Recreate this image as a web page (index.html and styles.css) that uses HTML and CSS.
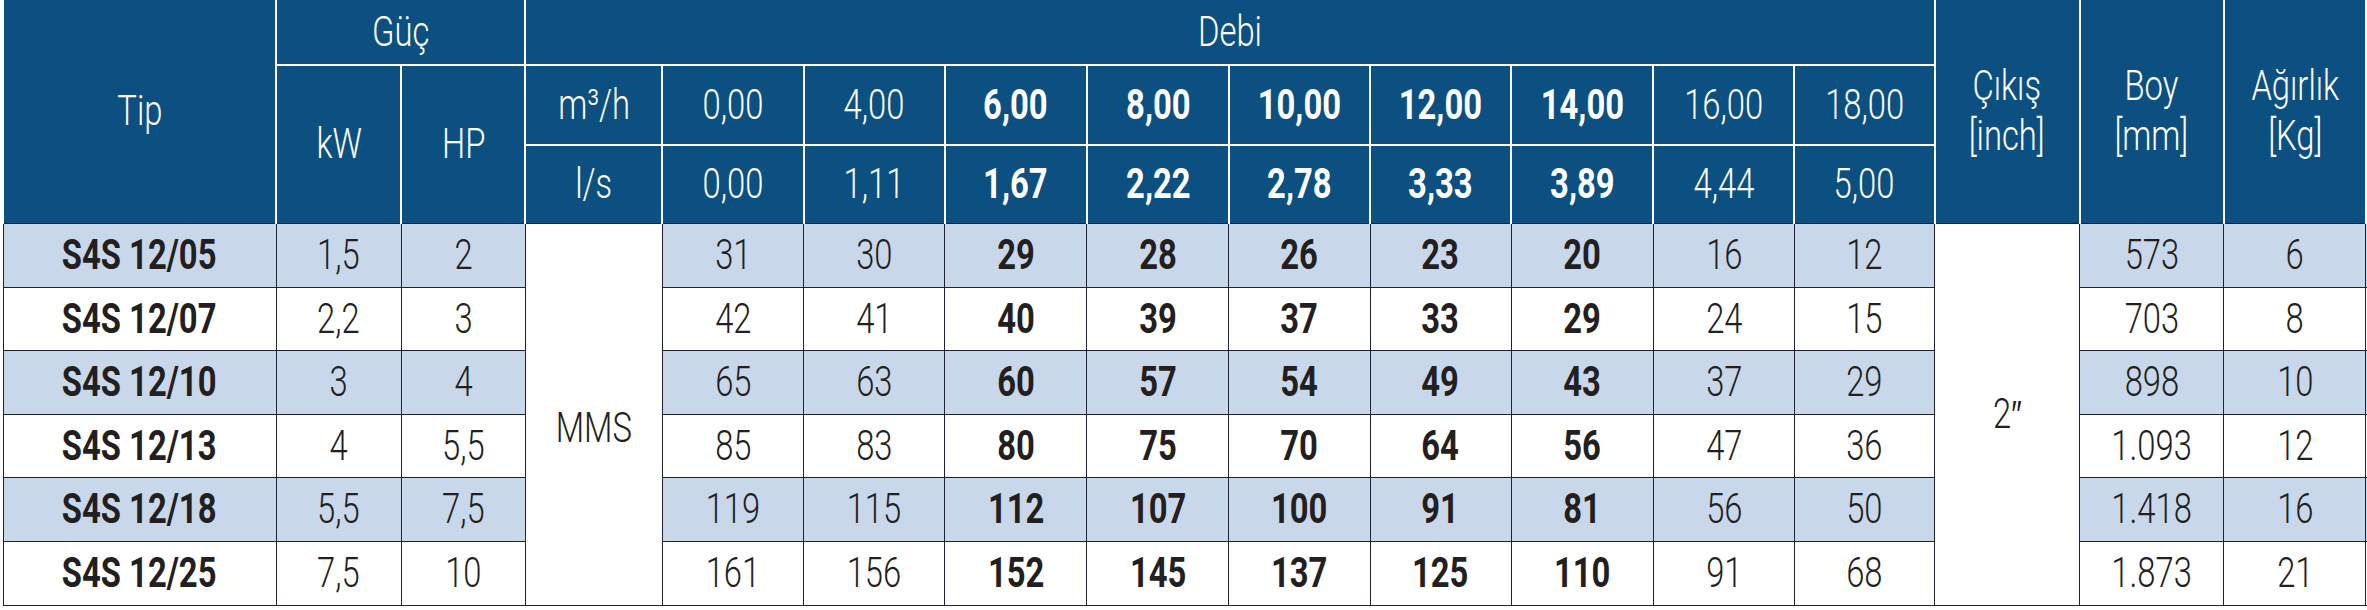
FILE: index.html
```html
<!DOCTYPE html>
<html lang="tr">
<head>
<meta charset="utf-8">
<title>S4S 12 Performans Tablosu</title>
<link rel="stylesheet" href="styles.css">
</head>
<body>
<table class="perf">
  <colgroup>
    <col class="w-tip"><col class="w-kw"><col class="w-hp"><col class="w-unit">
    <col class="w-v1"><col class="w-v2"><col class="w-v3"><col class="w-v4"><col class="w-v5">
    <col class="w-v6"><col class="w-v7"><col class="w-v8"><col class="w-v9">
    <col class="w-cikis"><col class="w-boy"><col class="w-agr"><col class="w-extra">
  </colgroup>
  <thead>
    <tr class="h1">
      <th rowspan="3" class="hb"><span class="t">Tip</span></th>
      <th colspan="2"><span class="t">Güç</span></th>
      <th colspan="10"><span class="t">Debi</span></th>
      <th rowspan="3" class="hb"><span class="t">Çıkış<br>[inch]</span></th>
      <th rowspan="3" class="hb"><span class="t">Boy<br>[mm]</span></th>
      <th rowspan="3" class="hb"><span class="t">Ağırlık<br>[Kg]</span></th>
      <th rowspan="3" class="hb"></th>
    </tr>
    <tr class="h2">
      <th rowspan="2" class="hb"><span class="t">kW</span></th>
      <th rowspan="2" class="hb"><span class="t">HP</span></th>
      <th><span class="t">m³/h</span></th>
      <th><span class="t">0,00</span></th>
      <th><span class="t">4,00</span></th>
      <th class="b"><span class="t">6,00</span></th>
      <th class="b"><span class="t">8,00</span></th>
      <th class="b"><span class="t">10,00</span></th>
      <th class="b"><span class="t">12,00</span></th>
      <th class="b"><span class="t">14,00</span></th>
      <th><span class="t">16,00</span></th>
      <th><span class="t">18,00</span></th>
    </tr>
    <tr class="h3">
      <th class="hb"><span class="t">l/s</span></th>
      <th class="hb"><span class="t">0,00</span></th>
      <th class="hb"><span class="t">1,11</span></th>
      <th class="hb b"><span class="t">1,67</span></th>
      <th class="hb b"><span class="t">2,22</span></th>
      <th class="hb b"><span class="t">2,78</span></th>
      <th class="hb b"><span class="t">3,33</span></th>
      <th class="hb b"><span class="t">3,89</span></th>
      <th class="hb"><span class="t">4,44</span></th>
      <th class="hb"><span class="t">5,00</span></th>
    </tr>
  </thead>
  <tbody>
    <tr class="odd r1">
      <td class="b"><span class="t">S4S 12/05</span></td><td><span class="t">1,5</span></td><td><span class="t">2</span></td>
      <td rowspan="6" class="span mms"><span class="t">MMS</span></td>
      <td><span class="t">31</span></td><td><span class="t">30</span></td>
      <td class="b"><span class="t">29</span></td><td class="b"><span class="t">28</span></td><td class="b"><span class="t">26</span></td><td class="b"><span class="t">23</span></td><td class="b"><span class="t">20</span></td>
      <td><span class="t">16</span></td><td><span class="t">12</span></td>
      <td rowspan="6" class="span"><span class="t">2<span class="dp">″</span></span></td>
      <td><span class="t">573</span></td><td><span class="t">6</span></td><td></td>
    </tr>
    <tr class="r2">
      <td class="b"><span class="t">S4S 12/07</span></td><td><span class="t">2,2</span></td><td><span class="t">3</span></td>
      <td><span class="t">42</span></td><td><span class="t">41</span></td>
      <td class="b"><span class="t">40</span></td><td class="b"><span class="t">39</span></td><td class="b"><span class="t">37</span></td><td class="b"><span class="t">33</span></td><td class="b"><span class="t">29</span></td>
      <td><span class="t">24</span></td><td><span class="t">15</span></td>
      <td><span class="t">703</span></td><td><span class="t">8</span></td><td></td>
    </tr>
    <tr class="odd r3">
      <td class="b"><span class="t">S4S 12/10</span></td><td><span class="t">3</span></td><td><span class="t">4</span></td>
      <td><span class="t">65</span></td><td><span class="t">63</span></td>
      <td class="b"><span class="t">60</span></td><td class="b"><span class="t">57</span></td><td class="b"><span class="t">54</span></td><td class="b"><span class="t">49</span></td><td class="b"><span class="t">43</span></td>
      <td><span class="t">37</span></td><td><span class="t">29</span></td>
      <td><span class="t">898</span></td><td><span class="t">10</span></td><td></td>
    </tr>
    <tr class="r4">
      <td class="b"><span class="t">S4S 12/13</span></td><td><span class="t">4</span></td><td><span class="t">5,5</span></td>
      <td><span class="t">85</span></td><td><span class="t">83</span></td>
      <td class="b"><span class="t">80</span></td><td class="b"><span class="t">75</span></td><td class="b"><span class="t">70</span></td><td class="b"><span class="t">64</span></td><td class="b"><span class="t">56</span></td>
      <td><span class="t">47</span></td><td><span class="t">36</span></td>
      <td><span class="t">1.093</span></td><td><span class="t">12</span></td><td></td>
    </tr>
    <tr class="odd r5">
      <td class="b"><span class="t">S4S 12/18</span></td><td><span class="t">5,5</span></td><td><span class="t">7,5</span></td>
      <td><span class="t">119</span></td><td><span class="t">115</span></td>
      <td class="b"><span class="t">112</span></td><td class="b"><span class="t">107</span></td><td class="b"><span class="t">100</span></td><td class="b"><span class="t">91</span></td><td class="b"><span class="t">81</span></td>
      <td><span class="t">56</span></td><td><span class="t">50</span></td>
      <td><span class="t">1.418</span></td><td><span class="t">16</span></td><td></td>
    </tr>
    <tr class="r6">
      <td class="b"><span class="t">S4S 12/25</span></td><td><span class="t">7,5</span></td><td><span class="t">10</span></td>
      <td><span class="t">161</span></td><td><span class="t">156</span></td>
      <td class="b"><span class="t">152</span></td><td class="b"><span class="t">145</span></td><td class="b"><span class="t">137</span></td><td class="b"><span class="t">125</span></td><td class="b"><span class="t">110</span></td>
      <td><span class="t">91</span></td><td><span class="t">68</span></td>
      <td><span class="t">1.873</span></td><td><span class="t">21</span></td><td></td>
    </tr>
  </tbody>
</table>
</body>
</html>
```
FILE: styles.css
```css
html, body {
  margin: 0;
  padding: 0;
  background: #ffffff;
  overflow: hidden;
}

body {
  font-family: Roboto, "Liberation Sans", sans-serif;
  font-size: 42px;
  font-weight: 300;
  color: #231f20;
}

.perf {
  border-collapse: collapse;
  table-layout: fixed;
  width: 2465px;
  margin-left: 2px;
}

.w-tip { width: 273px; }
.w-kw { width: 125px; }
.w-hp { width: 124px; }
.w-unit { width: 137px; }
.w-v1, .w-v2, .w-v5, .w-v6, .w-v8 { width: 141px; }
.w-v3, .w-v4, .w-v7 { width: 142px; }
.w-v9 { width: 140px; }
.w-cikis { width: 145px; }
.w-boy { width: 144px; }
.w-agr { width: 142px; }
.w-extra { width: 100px; }

.perf th {
  background: #0b5080;
  color: #ffffff;
  font-weight: 300;
  text-align: center;
  vertical-align: middle;
  border: 2px solid #ffffff;
  padding: 0;
  line-height: 50px;
  white-space: nowrap;
}

.perf .h1 th { border-top: none; }
.perf .h1 { height: 65px; }
.perf .h2 { height: 80px; }
.perf .h3 { height: 78px; }

.perf th.hb { border-bottom: 1px solid #1c2230; }

.perf td {
  border: 1px solid #1c2230;
  text-align: center;
  vertical-align: middle;
  padding: 0;
  line-height: 50px;
  white-space: nowrap;
  background: #ffffff;
}

.perf tbody tr { height: 64px; }
.perf tbody tr.r2, .perf tbody tr.r4 { height: 63px; }

.perf tr.odd td { background: #c8d7ea; }
.perf tr.odd td.span { background: #ffffff; }

.perf .b { font-weight: 700; }

.t {
  display: inline-block;
  transform: scaleX(0.78);
  transform-origin: center;
  text-align: center;
}

.dp {
  font-family: "DejaVu Sans", sans-serif;
  font-weight: 300;
  font-size: 38px;
}

.perf td.mms { padding-top: 28px; }
```
